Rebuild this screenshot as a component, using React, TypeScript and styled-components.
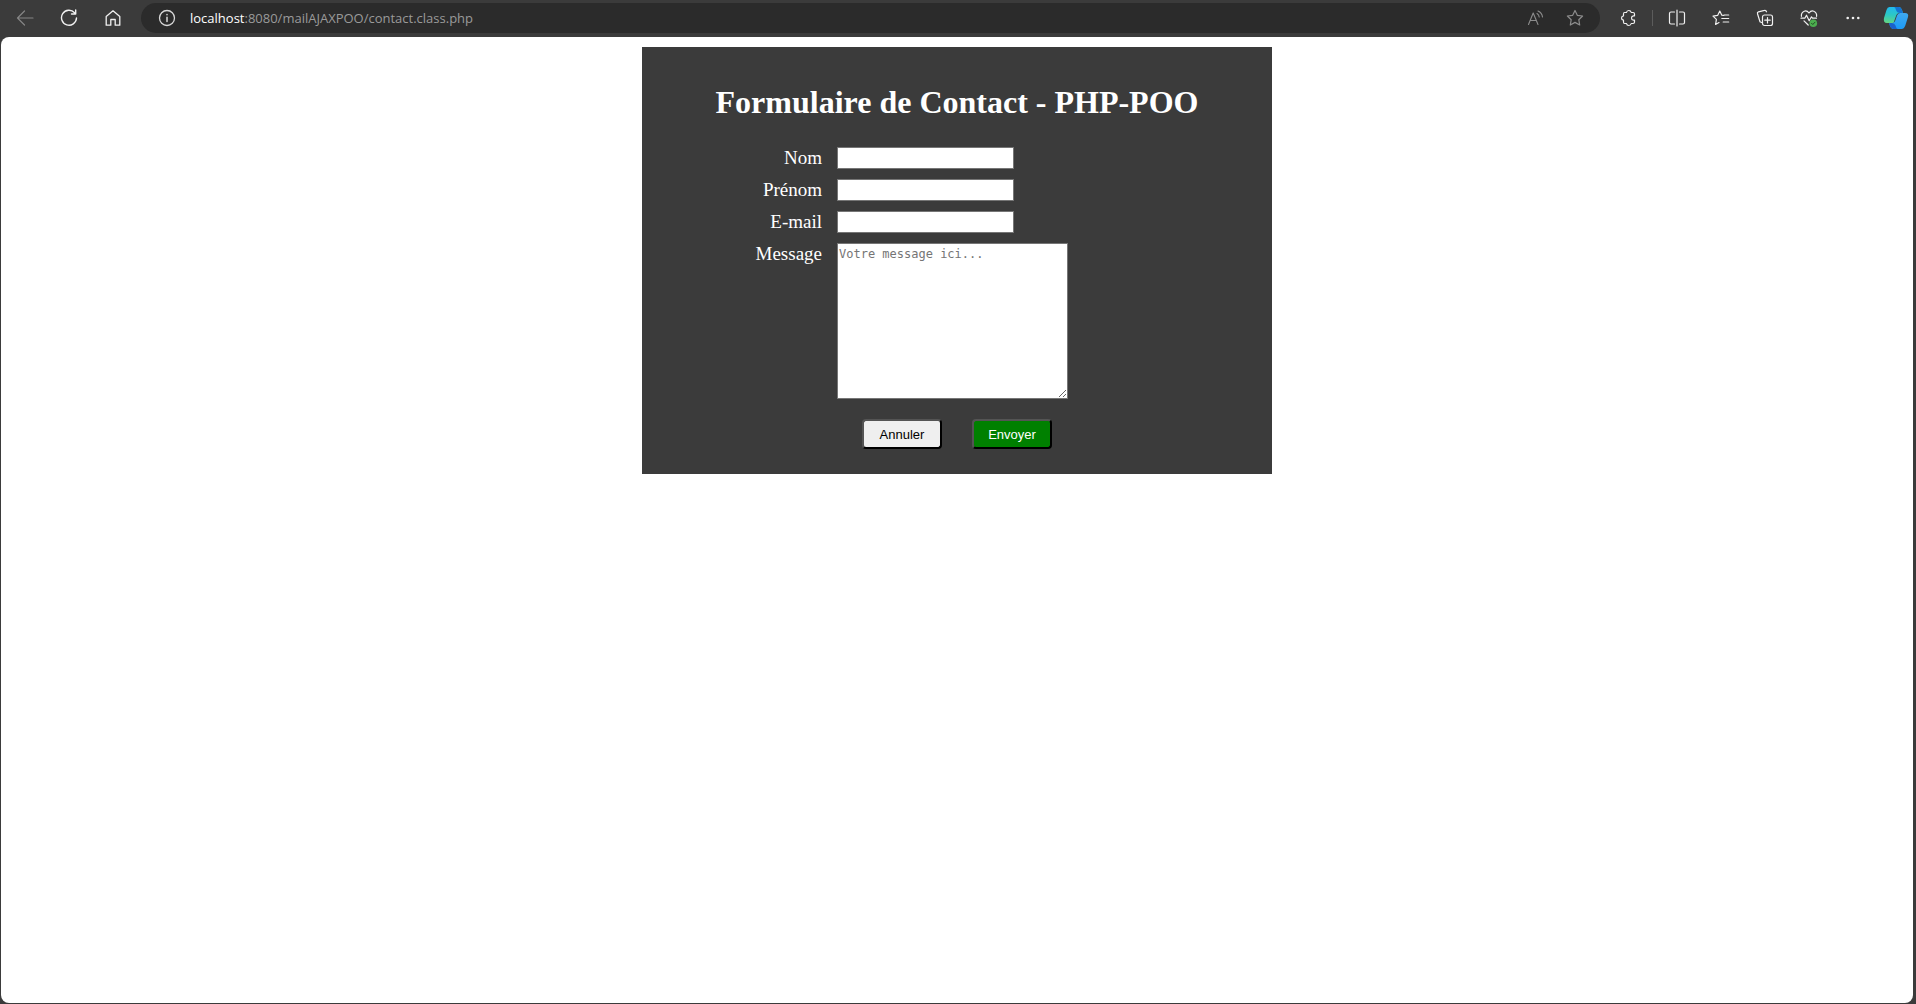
import React from 'react';
import styled, { createGlobalStyle } from 'styled-components';

const GlobalStyle = createGlobalStyle`
  *, *::before, *::after { box-sizing: border-box; }
  body { margin: 0; background: #3b3b3b; }
`;

const Browser = styled.div`
  display: flex;
  flex-direction: column;
  min-height: 100vh;
  background: #3b3b3b;
`;

const Toolbar = styled.header`
  display: flex;
  align-items: center;
  height: 37px;
  padding: 0 0 1px 3px;
`;

const IconButton = styled.button<{ $width?: number; $color?: string }>`
  display: flex;
  flex: none;
  align-items: center;
  justify-content: center;
  width: ${(p) => p.$width ?? 44}px;
  height: 30px;
  padding: 0;
  border: 0;
  background: none;
  color: ${(p) => p.$color ?? '#f0f0f0'};
`;

const AddressBar = styled.div`
  display: flex;
  flex: 1;
  align-items: center;
  height: 30px;
  margin: 0 7px 0 6px;
  padding: 0 5px;
  border-radius: 15px;
  background: #2b2b2b;
`;

const Url = styled.a`
  flex: 1;
  padding-left: 2px;
  color: #9a9a9a;
  font: 13px/20px "Open Sans", "Noto Sans", sans-serif;
  text-decoration: none;
`;

const Host = styled.span`
  color: #ffffff;
`;

const Separator = styled.span`
  width: 1px;
  height: 16px;
  margin: 0 2px 0 1px;
  background: #5c5c5c;
`;

const Page = styled.main`
  flex: 1;
  margin: 0 3px 1px 1px;
  padding: 10px;
  border-radius: 8px;
  background: #ffffff;
`;

const Card = styled.form`
  display: flex;
  flex-direction: column;
  max-width: 630px;
  margin: 0 auto;
  padding: 37px 15px 25px;
  background: #3b3b3b;
  color: #ffffff;
  font-family: "Liberation Serif", "Times New Roman", serif;
`;

const Title = styled.h1`
  margin: 0 0 26px;
  font-size: 32px;
  line-height: 37px;
  text-align: center;
`;

const Fields = styled.div`
  display: grid;
  grid-template-columns: 165px 1fr;
  gap: 10px 15px;
  align-items: start;
  justify-items: start;
`;

const Label = styled.label`
  justify-self: end;
  font-size: 19px;
  line-height: 22px;
`;

const TextInput = styled.input`
  width: 177px;
  height: 22px;
  padding: 1px 2px;
  border: 1px solid #767676;
  border-radius: 0;
  background: #ffffff;
  font: 13px "Liberation Sans", Arial, sans-serif;
`;

const MessageBox = styled.textarea`
  display: block;
  width: 231px;
  height: 156px;
  padding: 2px 1px;
  border: 1px solid #767676;
  border-radius: 0;
  background: #ffffff;
  font: 12px/17px "DejaVu Sans Mono", monospace;

  &::placeholder { color: #757575; }
`;

const Actions = styled.div`
  display: flex;
  justify-content: center;
  gap: 30px;
  margin-top: 20px;
`;

const ActionButton = styled.button<{ $background: string; $color: string }>`
  width: 80px;
  height: 30px;
  padding: 0;
  border: 2px outset #000000;
  border-radius: 4px;
  background: ${(p) => p.$background};
  color: ${(p) => p.$color};
  font: 13px "Liberation Sans", Arial, sans-serif;
`;

const Icon = ({ children, size = 18 }: { children: React.ReactNode; size?: number }) => (
  <svg
    width={size}
    height={size}
    viewBox={`0 0 ${size} ${size}`}
    fill="none"
    stroke="currentColor"
    strokeWidth="1.2"
    strokeLinecap="round"
    strokeLinejoin="round"
    aria-hidden="true"
  >
    {children}
  </svg>
);

const BackIcon = () => (
  <Icon><path d="M17 9H1.5M8.5 2L1.5 9L8.5 16" /></Icon>
);

const ReloadIcon = () => (
  <Icon>
    <path d="M14.6 3.7A7.5 7.5 0 1 0 16.5 9M15.7 1V5H11.5" strokeWidth="1.4" />
  </Icon>
);

const HomeIcon = () => (
  <Icon>
    <path d="M2.2 7.5L9 1.8L15.8 7.5V16.2H11.2V10.5H6.8V16.2H2.2Z" strokeWidth="1.3" />
  </Icon>
);

const InfoIcon = () => (
  <Icon>
    <circle cx="9" cy="9" r="7.5" strokeWidth="1.3" />
    <path d="M9 8.3V12.5M9 5.5V5.7" strokeWidth="1.5" />
  </Icon>
);

const ReadAloudIcon = () => (
  <Icon>
    <path d="M2.5 15.5L7.2 4L12 15.5M4.2 11.5H10.3M11 4.5Q13 5.7 13.2 8M12 2Q16 3.6 16.5 8" strokeWidth="1.1" />
  </Icon>
);

const StarIcon = () => (
  <Icon>
    <path d="M9 1.5L11.3 6.3L16.6 7L12.8 10.7L13.7 16L9 13.4L4.3 16L5.2 10.7L1.4 7L6.7 6.3Z" />
  </Icon>
);

const ExtensionIcon = () => (
  <Icon>
    <path d="M4.5 3.5H6.5Q6.8 1.5 8.8 1.5T11.2 3.5H13Q14.5 3.5 14.5 5V6.8H13.5Q11.5 7 11.5 9T13.5 11.2H14.5V13Q14.5 14.5 13 14.5H11.2Q10.8 16.5 8.8 16.5T6.5 14.5H4.5Q3.5 14.5 3.5 13V11.2Q1.5 10.9 1.5 9T3.5 6.8V5Q3.5 3.5 4.5 3.5Z" />
  </Icon>
);

const SplitIcon = () => (
  <Icon>
    <path d="M6.5 3H3Q1.5 3 1.5 4.5V13.5Q1.5 15 3 15H6.5M11.5 3H15Q16.5 3 16.5 4.5V13.5Q16.5 15 15 15H11.5M9 1V17" />
  </Icon>
);

const FavoritesIcon = () => (
  <Icon>
    <path d="M11.8 6.5L9.8 6.2L7.8 2L5.6 6.4L1 7.1L4.4 10.4L3.6 15.5L7 13.6M12 6H16.7M9.8 9.5H16.7M11.2 13H16.7" />
  </Icon>
);

const CollectionsIcon = () => (
  <Icon>
    <path d="M4 12.8L1.5 4.8Q1 3.4 2.5 2.8L8.5 1.4Q9.9 1 10.5 2.8M4 12.8L5.5 13.5" />
    <rect x="6.5" y="6" width="10" height="10.5" rx="2" />
    <path d="M11.5 8.5V14M8.8 11.2H14.2" />
  </Icon>
);

const HealthIcon = () => (
  <Icon>
    <path d="M1.4 7.3Q1 3.5 4.2 2.2Q7 1.3 9 4Q11 1.3 13.8 2.2Q17 3.5 16.6 7.3M1 9.2H4.8L6.5 6.2L9.2 11.8L11.5 7.8L12.5 9.2H16.5M4 11.8L8.2 16" />
    <circle cx="13.3" cy="14.2" r="3.8" fill="#4cae4f" stroke="none" />
    <path d="M11.6 14.3L12.8 15.5L15 13.2" stroke="#234d25" strokeWidth="1" />
  </Icon>
);

const MoreIcon = () => (
  <Icon>
    <g fill="currentColor" stroke="none">
      <circle cx="3.7" cy="9" r="1.3" />
      <circle cx="9" cy="9" r="1.3" />
      <circle cx="14.3" cy="9" r="1.3" />
    </g>
  </Icon>
);

const CopilotIcon = () => (
  <Icon size={26}>
    <defs>
      <linearGradient id="copilotLeft" x1="0.4" y1="0" x2="0.3" y2="1">
        <stop offset="0" stopColor="#22b8ee" />
        <stop offset="0.5" stopColor="#2cc8c4" />
        <stop offset="1" stopColor="#63d583" />
      </linearGradient>
      <linearGradient id="copilotRight" x1="0.5" y1="0" x2="0.4" y2="1">
        <stop offset="0" stopColor="#3fa8ee" />
        <stop offset="1" stopColor="#1b9bf8" />
      </linearGradient>
    </defs>
    <g stroke="none">
      <path d="M6.5 2H16Q18 2 19 5L20 8H16.5Q14 8 13 11L10.5 18H4Q0 18 1 13L3.5 5Q4.4 2 6.5 2Z" fill="url(#copilotLeft)" />
      <path d="M11 2H16Q18 2 19 5L20 8H17Q14 8 13 5Q12.3 2 11 2Z" fill="#1472d0" />
      <path d="M17 8H22Q26 8 25 12L22.3 20.5Q21 24 18.5 24H10Q8 24 7 21L6 18H9Q11.5 18 12.5 15L14 10.5Q15 8 17 8Z" fill="url(#copilotRight)" />
      <path d="M6 18H9Q11.5 18 12.5 20.5Q13.4 24 15 24H10Q8 24 7 21Z" fill="#1a62cc" />
    </g>
  </Icon>
);

const textFields = [
  { id: 'nom', label: 'Nom', type: 'text' },
  { id: 'prenom', label: 'Prénom', type: 'text' },
  { id: 'email', label: 'E-mail', type: 'email' },
];

export default function App() {
  return (
    <Browser>
      <GlobalStyle />
      <Toolbar>
        <IconButton aria-label="Retour" $color="#858585"><BackIcon /></IconButton>
        <IconButton aria-label="Actualiser"><ReloadIcon /></IconButton>
        <IconButton aria-label="Accueil"><HomeIcon /></IconButton>
        <AddressBar>
          <IconButton aria-label="Informations sur le site" $width={42} $color="#d8d8d8"><InfoIcon /></IconButton>
          <Url href="#"><Host>localhost</Host>:8080/mailAJAXPOO/contact.class.php</Url>
          <IconButton aria-label="Lecture à voix haute" $width={40} $color="#8c8c8c"><ReadAloudIcon /></IconButton>
          <IconButton aria-label="Ajouter aux favoris" $width={40} $color="#8c8c8c"><StarIcon /></IconButton>
        </AddressBar>
        <IconButton aria-label="Extensions"><ExtensionIcon /></IconButton>
        <Separator />
        <IconButton aria-label="Fractionner l'écran"><SplitIcon /></IconButton>
        <IconButton aria-label="Favoris"><FavoritesIcon /></IconButton>
        <IconButton aria-label="Collections"><CollectionsIcon /></IconButton>
        <IconButton aria-label="Performances"><HealthIcon /></IconButton>
        <IconButton aria-label="Paramètres et plus"><MoreIcon /></IconButton>
        <IconButton aria-label="Copilot" $width={41}><CopilotIcon /></IconButton>
      </Toolbar>
      <Page>
        <Card onSubmit={(event) => event.preventDefault()}>
          <Title>Formulaire de Contact - PHP-POO</Title>
          <Fields>
            {textFields.map(({ id, label, type }) => (
              <React.Fragment key={id}>
                <Label htmlFor={id}>{label}</Label>
                <TextInput id={id} name={id} type={type} />
              </React.Fragment>
            ))}
            <Label htmlFor="message">Message</Label>
            <MessageBox id="message" name="message" placeholder="Votre message ici..." />
          </Fields>
          <Actions>
            <ActionButton type="reset" $background="#efefef" $color="#000000">Annuler</ActionButton>
            <ActionButton type="submit" $background="#008000" $color="#ffffff">Envoyer</ActionButton>
          </Actions>
        </Card>
      </Page>
    </Browser>
  );
}
